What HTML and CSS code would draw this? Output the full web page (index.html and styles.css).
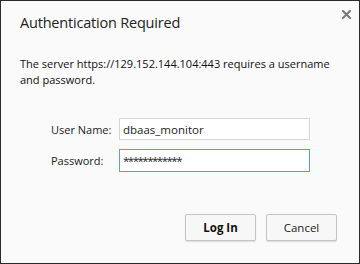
FILE: index.html
```html
<!DOCTYPE html>
<html lang="en">
<head>
  <meta charset="UTF-8" />
  <meta name="viewport" content="width=device-width, initial-scale=1.0" />
  <title>Authentication Required</title>
  <link rel="stylesheet" href="styles.css">
</head>
<body>
  <div class="dialog">
    <div class="header">
      <h1>Authentication Required</h1>
      <button class="close" aria-label="Close">
        <svg width="9" height="9" viewBox="0 0 9 9">
          <path d="M1 1 L8 8 M8 1 L1 8" stroke="#777" stroke-width="2" stroke-linecap="square" />
        </svg>
      </button>
    </div>

    <p class="mensaje">The server https://129.152.144.104:443 requires a username and password.</p>

    <div class="campos">
      <label for="usuario">User Name:</label>
      <div class="caja">
        <input id="usuario" class="campo" type="text" value="dbaas_monitor">
      </div>
      <label for="clave">Password:</label>
      <div class="caja activa">
        <input id="clave" class="campo clave" type="text" value="************">
      </div>
    </div>

    <div class="botones">
      <button class="boton principal">Log In</button>
      <button class="boton">Cancel</button>
    </div>
  </div>
</body>
</html>
```

FILE: styles.css
```css
body {
  margin: 0;
  padding: 0;
  font-family: 'Open Sans', 'Noto Sans', sans-serif;
  background: #fafafa;
}

.dialog {
  width: 360px;
  height: 264px;
  box-sizing: border-box;
  border: 1px solid #2a2a2a;
  background: #fafafa;
  padding: 10px 22px 0 19px;
  color: #1a1a1a;
}

.header {
  display: flex;
  justify-content: space-between;
  align-items: flex-start;
}

h1 {
  margin: 2px 0 0 0;
  font-size: 14.5px;
  font-weight: normal;
  letter-spacing: -0.2px;
  line-height: 20px;
  color: #222;
}

.close {
  border: none;
  background: none;
  padding: 0;
  margin: -1px -14px 0 0;
  width: 9px;
  height: 9px;
  display: flex;
  cursor: pointer;
}

.mensaje {
  margin: 23px 0 0 0;
  font-size: 11px;
  line-height: 16px;
  color: #111;
}

.campos {
  display: grid;
  grid-template-columns: 68px 191px;
  grid-auto-rows: 22px;
  row-gap: 9px;
  align-items: center;
  margin: 30px 0 0 31px;
}

.campos label {
  font-size: 11px;
  color: #222;
}

.caja {
  box-sizing: border-box;
  height: 22px;
  width: 191px;
  border: 1px solid #d6d6d6;
  background: #fff;
  display: flex;
}

/* campo con foco: borde azul */
.caja.activa {
  height: 23px;
  border-color: #5a9af5;
}

.campo {
  flex: 1;
  min-width: 0;
  margin: 0;
  padding: 0 3px;
  border: none;
  background: transparent;
  font-family: inherit;
  font-size: 11.5px;
  color: #222;
  outline: none;
}

.campo.clave {
  letter-spacing: -1.5px;
}

.botones {
  display: flex;
  justify-content: flex-end;
  gap: 10px;
  margin-top: 43px;
}

.boton {
  width: 71px;
  height: 27px;
  box-sizing: border-box;
  border: 1px solid #c4c4c4;
  border-radius: 2px;
  background: #f7f7f7;
  box-shadow: 0 1px 1px rgba(0, 0, 0, 0.12);
  font-family: inherit;
  font-size: 11.5px;
  color: #222;
  cursor: pointer;
}

.boton.principal {
  font-weight: bold;
  color: #111;
}
```
